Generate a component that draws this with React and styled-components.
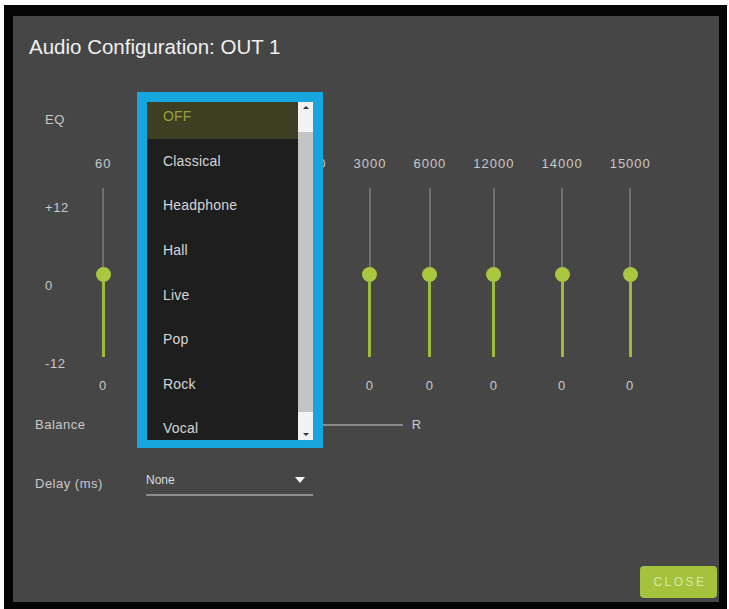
import styled, { createGlobalStyle } from 'styled-components';

const GlobalStyle = createGlobalStyle`
  html, body {
    margin: 0;
    background: #ffffff;
  }
  body {
    font-family: 'Liberation Sans', Arial, sans-serif;
  }
`;

const Frame = styled.div`
  margin: 5px 2px 0 4px;
  padding: 11px 8px 7px 9px;
  background: #050505;
  width: 723px;
  box-sizing: border-box;
`;

const Panel = styled.div`
  position: relative;
  display: flex;
  flex-direction: column;
  width: 706px;
  height: 586px;
  padding-top: 19px;
  box-sizing: border-box;
  background: #464646;
  overflow: hidden;
`;

const Title = styled.h1`
  margin: 0 0 0 16px;
  font-size: 20.5px;
  line-height: 24px;
  font-weight: 400;
  color: #f0f0f0;
`;

const Label = styled.div`
  font-size: 13px;
  line-height: 16px;
  letter-spacing: 0.6px;
  color: #c9c9c9;
  white-space: nowrap;
`;

const BandLabel = styled(Label)`
  letter-spacing: 1px;
`;

const EqRow = styled.div`
  margin: 53px 0 0 32px;
`;

const EqArea = styled.div`
  display: flex;
  margin: 28px 0 0 32px;
`;

const Scale = styled.div`
  display: flex;
  flex-direction: column;
  gap: 62px;
  width: 50px;
  padding-top: 44px;
`;

const Bands = styled.div`
  display: flex;
  gap: 27px;
`;

const Band = styled.div`
  display: flex;
  flex-direction: column;
  align-items: center;
`;

const Track = styled.div`
  display: flex;
  flex-direction: column;
  align-items: center;
  width: 15px;
  height: 169px;
  margin: 16px 0 21px;
`;

const UpperRail = styled.div`
  width: 2px;
  height: 79px;
  background: #707070;
`;

const Knob = styled.div`
  width: 15px;
  height: 15px;
  border-radius: 50%;
  background: #abc63f;
  flex-shrink: 0;
`;

const LowerRail = styled.div`
  width: 3px;
  height: 75px;
  background: #9cbb3a;
`;

const FieldRow = styled.div`
  display: flex;
  align-items: center;
  margin: ${({ $top }) => $top}px 0 0 22px;
`;

const FieldLabel = styled(Label)`
  width: 111px;
  letter-spacing: 0.5px;
`;

const BalanceLine = styled.div`
  position: relative;
  width: 241px;
  height: 2px;
  margin: 0 9px 0 8px;
  background: #8a8a8a;
`;

const BalanceKnob = styled(Knob)`
  position: absolute;
  left: 113px;
  top: -7px;
`;

const Select = styled.div`
  position: relative;
  width: 167px;
  padding-bottom: 6px;
  border-bottom: 2px solid #8e8e8e;
  font-size: 12px;
  line-height: 16px;
  color: #dcdcdc;
`;

const Caret = styled.span`
  position: absolute;
  right: 8px;
  top: 5px;
  border-left: 5.5px solid transparent;
  border-right: 5.5px solid transparent;
  border-top: 6px solid #f4f4f4;
`;

const CloseButton = styled.button`
  align-self: flex-end;
  margin: auto 2px 4px 0;
  width: 77px;
  height: 32px;
  border: none;
  border-radius: 4px;
  background: #a4c23b;
  color: #d9e9a2;
  font-family: 'Liberation Sans', Arial, sans-serif;
  font-size: 12px;
  letter-spacing: 2.5px;
  padding: 0 0 0 3px;
`;

const Dropdown = styled.div`
  position: absolute;
  left: 124px;
  top: 76px;
  width: 186px;
  height: 356px;
  box-sizing: border-box;
  display: flex;
  border: 10px solid #17a5dd;
  border-bottom-width: 8px;
  background: #1e1e1e;
`;

const List = styled.div`
  flex: 1;
  overflow: hidden;
`;

const ListInner = styled.div`
  margin-top: -8px;
`;

const Option = styled.div`
  display: flex;
  align-items: center;
  height: 44.6px;
  padding-left: 16px;
  font-size: 14px;
  letter-spacing: 0.2px;
  color: ${({ $selected }) => ($selected ? '#93a23a' : '#d6d6d6')};
  background: ${({ $selected }) => ($selected ? '#3e3e22' : 'transparent')};
`;

const Scrollbar = styled.div`
  display: flex;
  flex-direction: column;
  width: 15px;
  background: #f2f2f2;
`;

const ScrollEnd = styled.div`
  display: flex;
  justify-content: center;
  align-items: ${({ $down }) => ($down ? 'flex-end' : 'flex-start')};
  height: ${({ $down }) => ($down ? 28 : 30)}px;
  padding: 4px 0;
  box-sizing: border-box;
`;

const Arrow = styled.span`
  border-left: 3px solid transparent;
  border-right: 3px solid transparent;
  ${({ $down }) =>
    $down ? 'border-top: 3px solid #333;' : 'border-bottom: 3px solid #333;'}
`;

const Thumb = styled.div`
  flex: 1;
  background: #c4c4c4;
`;

const bands = ['60', '150', '250', '500', '1000', '3000', '6000', '12000', '14000', '15000'];
const presets = ['OFF', 'Classical', 'Headphone', 'Hall', 'Live', 'Pop', 'Rock', 'Vocal'];

export default function App() {
  return (
    <>
      <GlobalStyle />
      <Frame>
        <Panel>
          <Title>Audio Configuration: OUT 1</Title>

          <EqRow>
            <Label>EQ</Label>
          </EqRow>

          <EqArea>
            <Scale>
              <Label>+12</Label>
              <Label>0</Label>
              <Label>-12</Label>
            </Scale>
            <Bands>
              {bands.map((b) => (
                <Band key={b}>
                  <BandLabel>{b}</BandLabel>
                  <Track>
                    <UpperRail />
                    <Knob />
                    <LowerRail />
                  </Track>
                  <BandLabel>0</BandLabel>
                </Band>
              ))}
            </Bands>
          </EqArea>

          <FieldRow $top={23}>
            <FieldLabel>Balance</FieldLabel>
            <Label>L</Label>
            <BalanceLine>
              <BalanceKnob />
            </BalanceLine>
            <Label>R</Label>
          </FieldRow>

          <FieldRow $top={39}>
            <FieldLabel>Delay (ms)</FieldLabel>
            <Select>
              None
              <Caret />
            </Select>
          </FieldRow>

          <CloseButton>CLOSE</CloseButton>

          <Dropdown>
            <List>
              <ListInner>
                {presets.map((p, i) => (
                  <Option key={p} $selected={i === 0}>
                    {p}
                  </Option>
                ))}
              </ListInner>
            </List>
            <Scrollbar>
              <ScrollEnd>
                <Arrow />
              </ScrollEnd>
              <Thumb />
              <ScrollEnd $down>
                <Arrow $down />
              </ScrollEnd>
            </Scrollbar>
          </Dropdown>
        </Panel>
      </Frame>
    </>
  );
}
